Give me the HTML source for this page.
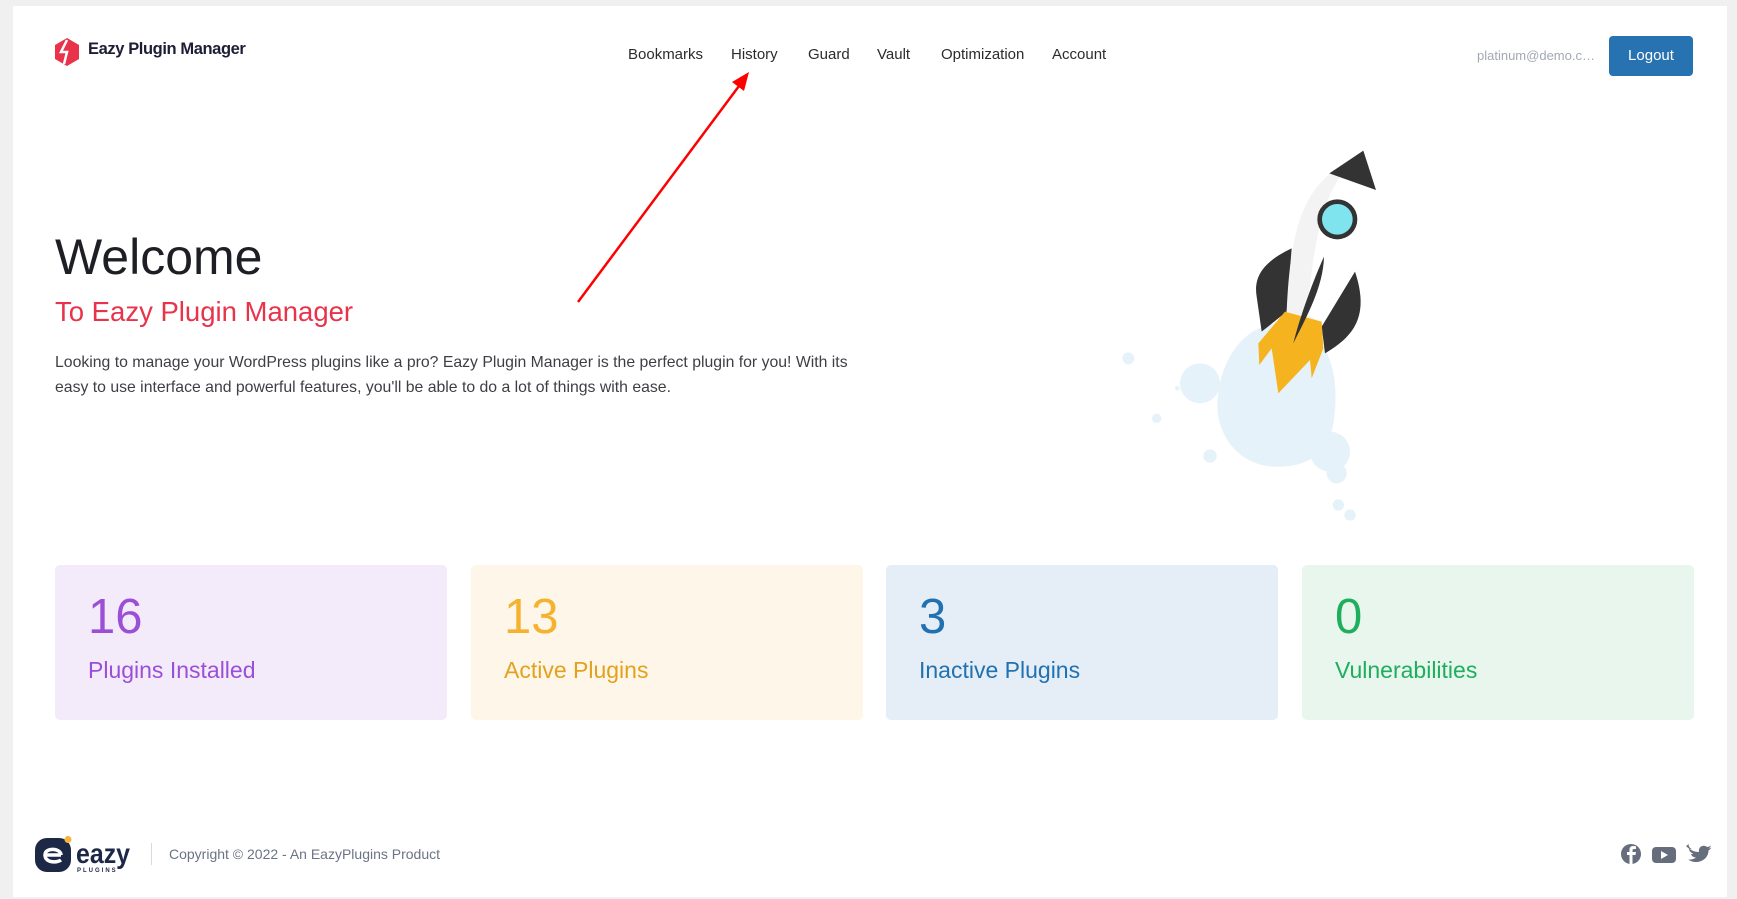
<!DOCTYPE html>
<html><head><meta charset="utf-8"><style>
*{margin:0;padding:0;box-sizing:border-box}
body{width:1737px;height:899px;background:#f0f0f0;font-family:"Liberation Sans",Arial,sans-serif;position:relative;overflow:hidden}
.panel{position:absolute;left:13px;top:6px;width:1714px;height:891px;background:#fff}
.abs{position:absolute;white-space:nowrap}
.nav{top:46px;font-size:15px;color:#2c2c2c}
.card{position:absolute;top:565px;width:392px;height:155px;border-radius:5px}
.card .n{position:absolute;left:33px;top:24px;font-size:49px}
.card .l{position:absolute;left:33px;top:92px;font-size:23px}
</style></head><body>
<div class="panel"></div>

<svg class="abs" style="left:54px;top:38px" width="26" height="28" viewBox="0 0 26 28">
<polygon points="13,0 25,7 25,21 13,28 1,21 1,7" fill="#e8334a"/>
<path d="M13,2 L7,14 L13,14 L10,26" stroke="#fff" stroke-width="2.5" fill="none"/>
</svg>
<div class="abs" style="left:88px;top:40px;font-size:16.5px;font-weight:bold;color:#1d1d35;letter-spacing:-0.4px">Eazy Plugin Manager</div>

<div class="abs nav" style="left:628px">Bookmarks</div>
<div class="abs nav" style="left:731px">History</div>
<div class="abs nav" style="left:808px">Guard</div>
<div class="abs nav" style="left:877px">Vault</div>
<div class="abs nav" style="left:941px">Optimization</div>
<div class="abs nav" style="left:1052px">Account</div>

<div class="abs" style="left:1477px;top:48px;font-size:13px;color:#a3a8b3">platinum@demo.c…</div>
<div class="abs" style="left:1609px;top:36px;width:84px;height:40px;background:#2772b0;border-radius:4px;color:#fff;font-size:15px;text-align:center;line-height:40px">Logout</div>

<div class="abs" style="left:55px;top:228px;font-size:50px;color:#1d1f24">Welcome</div>
<div class="abs" style="left:55px;top:296px;font-size:27.5px;color:#e8334a">To Eazy Plugin Manager</div>
<div class="abs" style="left:55px;top:350px;font-size:15.8px;color:#3d3f44;line-height:25px;white-space:normal;width:820px">Looking to manage your WordPress plugins like a pro? Eazy Plugin Manager is the perfect plugin for you! With its easy to use interface and powerful features, you'll be able to do a lot of things with ease.</div>

<svg class="abs" style="left:0;top:0" width="1737" height="899">
<line x1="578" y1="302" x2="742" y2="82" stroke="#f00" stroke-width="2.5"/>
<polygon points="749,72 732,82 744,91" fill="#f00"/>
</svg>

<svg class="abs" style="left:1100px;top:130px" width="300" height="420" viewBox="0 0 900 1260">
<g fill="#e6f2f9">
<path d="M560,580 C700,600 720,760 700,880 C680,990 600,1010 530,1010 C420,1010 350,920 352,820 C355,700 430,570 560,580Z"/>
<circle cx="300" cy="760" r="60"/><circle cx="690" cy="965" r="60"/><circle cx="710" cy="1030" r="30"/>
<circle cx="85" cy="685" r="18"/><circle cx="170" cy="865" r="14"/><circle cx="330" cy="978" r="20"/>
<circle cx="715" cy="1125" r="17"/><circle cx="750" cy="1155" r="17"/><circle cx="232" cy="775" r="7"/>
</g>
<path d="M575,355 C490,395 460,440 470,500 L485,605 L560,545 Z" fill="#333"/>
<path d="M765,425 L665,590 L675,670 C760,620 810,560 765,425Z" fill="#333"/>
<path d="M555,545 L475,640 L478,705 L515,655 L535,790 L630,690 L635,745 L670,655 L665,575 Z" fill="#f5b41f"/>
<path d="M690,130 C610,200 570,300 560,545 L665,575 C720,450 790,300 826,180 Z" fill="#f3f3f3"/>
<path d="M720,140 C660,230 640,360 620,555 L665,575 C720,450 790,300 826,180 Z" fill="#fff"/>
<path d="M688,130 L790,62 L828,180 Z" fill="#333"/>
<circle cx="712" cy="268" r="60" fill="#333"/><circle cx="712" cy="268" r="46" fill="#80e4ef"/>
<path d="M672,380 C640,450 600,560 580,640 C620,560 670,470 672,380Z" fill="#333"/>
</svg>

<div class="card" style="left:55px;background:#f3eafa"><div class="n" style="color:#9b4fd6">16</div><div class="l" style="color:#9b4fd6">Plugins Installed</div></div>
<div class="card" style="left:471px;background:#fef6e8"><div class="n" style="color:#f4b22e">13</div><div class="l" style="color:#e3a21d">Active Plugins</div></div>
<div class="card" style="left:886px;background:#e5eef6"><div class="n" style="color:#2171b0">3</div><div class="l" style="color:#2171b0">Inactive Plugins</div></div>
<div class="card" style="left:1302px;background:#e8f6ee"><div class="n" style="color:#1fae5e">0</div><div class="l" style="color:#1fae5e">Vulnerabilities</div></div>

<svg class="abs" style="left:35px;top:836px" width="100" height="38" viewBox="0 0 100 38">
<rect x="0" y="2" width="36" height="34" rx="12" fill="#1d2846"/>
<path d="M10,19 H26 M26,19 C26,12 10,11 10,19 C10,27 22,27 26,24" stroke="#fff" stroke-width="3.5" fill="none"/>
<circle cx="33" cy="3.5" r="3.5" fill="#f6b43c"/>
<text x="41" y="27" font-family="Liberation Sans Narrow, Liberation Sans" font-size="28" font-weight="bold" fill="#1d2846" textLength="54" lengthAdjust="spacingAndGlyphs">eazy</text>
<text x="42" y="36" font-family="Liberation Sans" font-size="6" letter-spacing="2" font-weight="bold" fill="#1d2846">PLUGINS</text>
</svg>
<div class="abs" style="left:151px;top:843px;width:1px;height:22px;background:#d8dae0"></div>
<div class="abs" style="left:169px;top:846px;font-size:14px;color:#6b7385">Copyright © 2022 - An EazyPlugins Product</div>

<svg class="abs" style="left:1620px;top:843px" width="100" height="22" viewBox="0 0 100 22">
<circle cx="11" cy="11" r="10" fill="#666e7d"/>
<path d="M12.5,21 V12 H15.5 L16,9 H12.5 V7.5 C12.5,6.5 13,6 14,6 H16 V3.3 C15,3.2 14,3 13,3 C10.5,3 9.5,4.5 9.5,7 V9 H7 V12 H9.5 V21 Z" fill="#fff"/>
<rect x="32" y="4" width="24" height="16" rx="4" fill="#666e7d"/>
<polygon points="41,8 41,16 48,12" fill="#fff"/>
<path d="M68,6 C72,10 76,12 81,12 C80,7 85,4 89,7 C90.5,7 92,6 93,5.5 C92.5,7 91.5,8 90.5,8.5 C91.5,8.5 92.5,8 93.5,7.5 C92.5,9 91.5,10 90.5,10.5 C90.5,17 85,22 78,22 C75,22 72,21 70,19.5 C73,20 76,19 78,17.5 C75,17.5 73.5,15.5 73,14 C74,14 75,14 75.5,13.7 C72.5,13 71,10.5 71,8.5 C72,9 73,9.3 74,9.3 C71,7.5 70,5.5 71,4 Z" fill="#666e7d" transform="translate(-2,-3)"/>
</svg>
</body></html>
